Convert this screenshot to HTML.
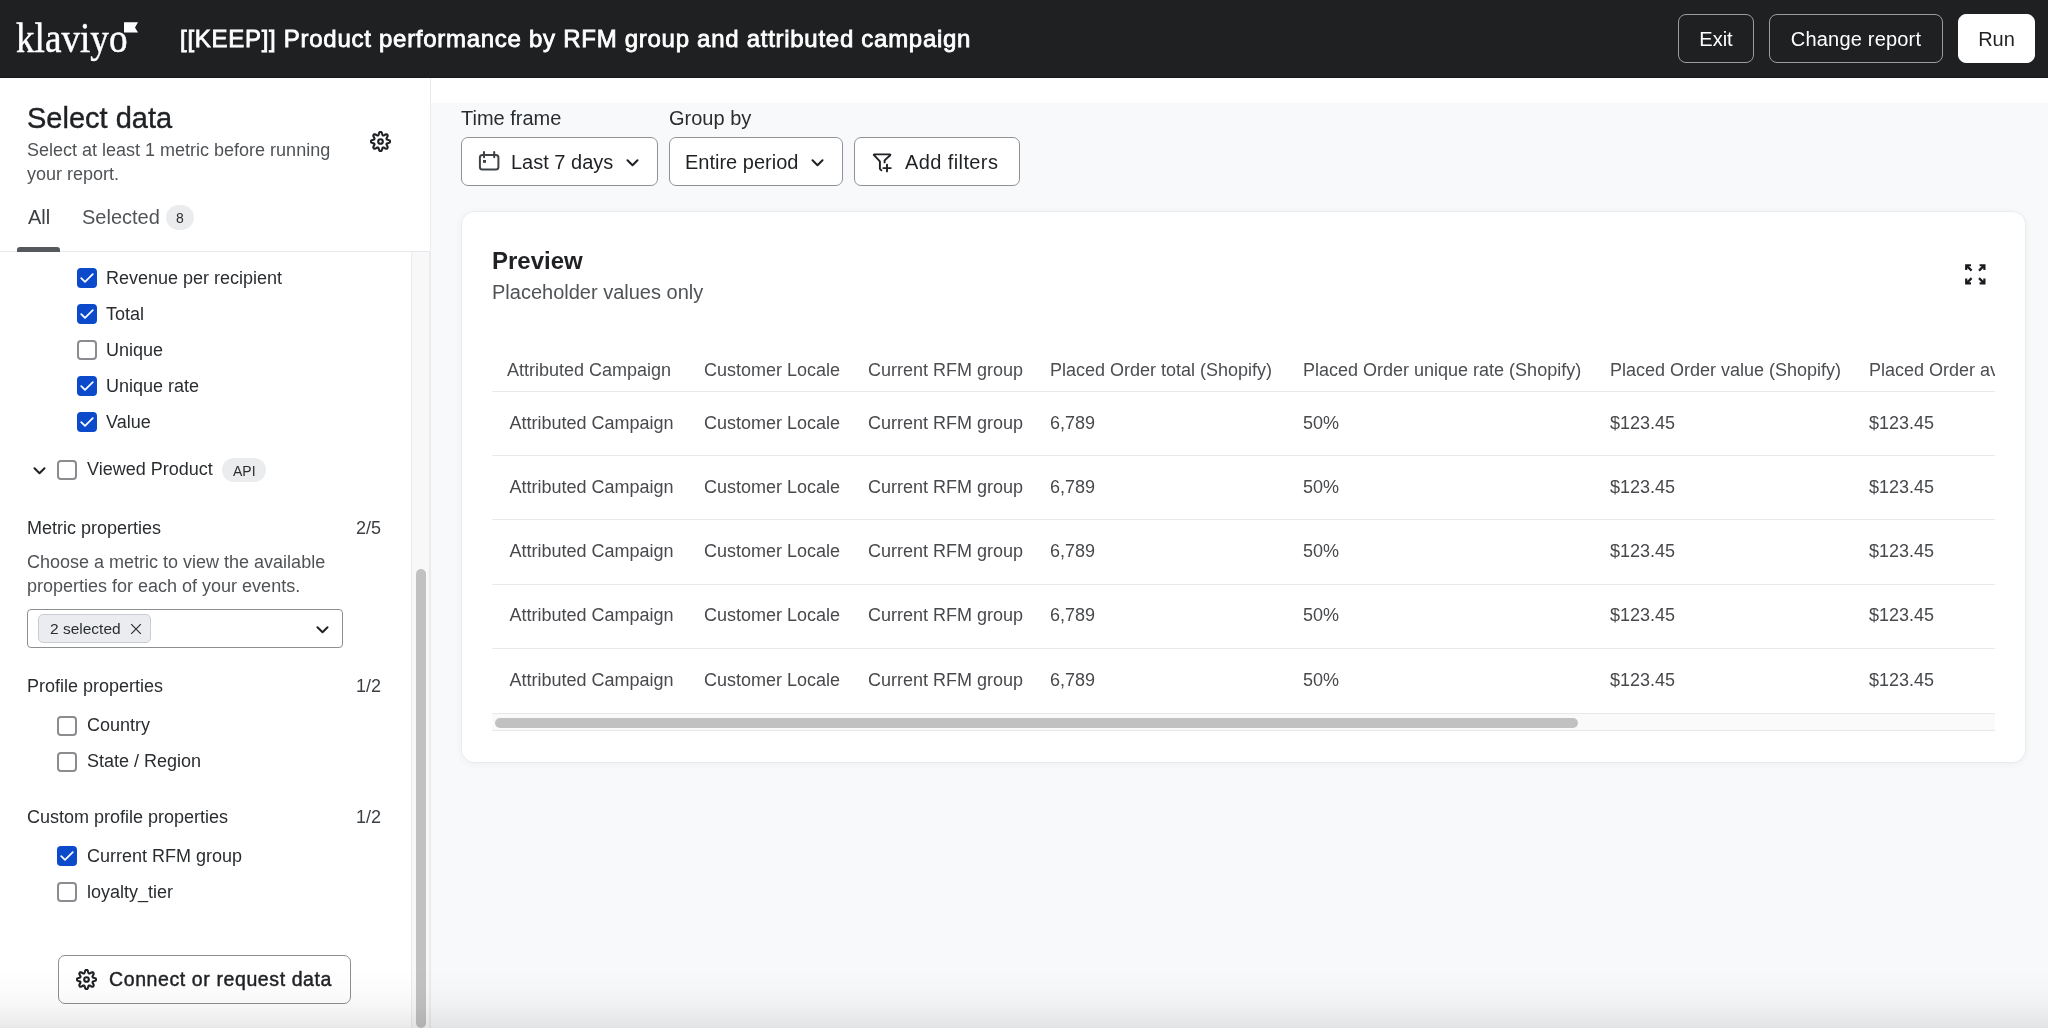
<!DOCTYPE html>
<html><head><meta charset="utf-8">
<style>
*{box-sizing:border-box;margin:0;padding:0}
html{-webkit-font-smoothing:antialiased}body{will-change:transform;width:2048px;height:1028px;overflow:hidden;background:#f8f9fa;font-family:"Liberation Sans",sans-serif;color:#1f2124}
.a{position:absolute}
.t{position:absolute;line-height:1;white-space:nowrap}
#hdr{left:0;top:0;width:2048px;height:78px;background:#1f2022;border-bottom:1px solid #16171a}
.hbtn{position:absolute;top:14px;height:49px;padding-top:2px;border:1px solid #9c9da0;border-radius:8px;color:#fff;font-size:20px;display:flex;align-items:center;justify-content:center}
#side{left:0;top:78px;width:430px;height:950px;background:#fff}
#sideb{left:430px;top:78px;width:1px;height:950px;background:#e9ebee}
.cb{position:absolute;width:20px;height:20px;border-radius:4px;background:#0b4acb}
.cb svg{position:absolute;left:0;top:0}
.cu{position:absolute;width:20px;height:20px;border-radius:4px;border:2px solid #8a8c8f;background:#fff}
.lbl{font-size:18px;color:#2a2d30}
.sec{font-size:18px;color:#2a2d30}
.cnt{font-size:18px;color:#3c3f43}
.gray{color:#505356}
.fbtn{position:absolute;top:137px;height:49px;border:1px solid #8f9195;border-radius:7px;background:#fff}
#card{left:462px;top:212px;width:1563px;height:550px;background:#fff;border-radius:13px;box-shadow:0 0 0 1px rgba(0,0,0,.035),0 1px 8px rgba(0,0,0,.06)}
.th{font-size:18px;color:#4b4d50}
.td{font-size:18px;color:#47494c}
.rb{position:absolute;left:492px;width:1503px;height:1px;background:#e8ebee}
</style></head>
<body>
<!-- HEADER -->
<div id="hdr" class="a">
  <div class="t" style="left:16px;top:15.7px;font-family:'Liberation Serif',serif;font-size:43px;color:#fff;-webkit-text-stroke:0.5px #fff;transform:scaleX(0.865);transform-origin:0 0">klaviyo</div>
  <svg class="a" style="left:124px;top:22px" width="15" height="12" viewBox="0 0 15 12"><path d="M0 0.3H14L11 5.5L14 10.6H0Z" fill="#fff"/></svg>
  <div class="t" style="left:180px;top:26.8px;font-size:24px;color:#fff;-webkit-text-stroke:0.8px #fff;letter-spacing:0.72px">[[KEEP]] Product performance by RFM group and attributed campaign</div>
  <div class="hbtn" style="left:1678px;width:76px">Exit</div>
  <div class="hbtn" style="left:1769px;width:174px;letter-spacing:0.2px">Change report</div>
  <div class="hbtn" style="left:1958px;width:77px;background:#fff;border-color:#fff;color:#1f2124">Run</div>
</div>

<!-- SIDEBAR -->
<div id="side" class="a"></div>
<div id="sideb" class="a"></div>
<div class="t" style="left:27px;top:103.9px;font-size:29px;color:#1f2124;-webkit-text-stroke:0.4px #1f2124">Select data</div>
<div class="a gray" style="left:27px;top:137.7px;font-size:18px;line-height:24.6px;white-space:nowrap">Select at least 1 metric before running<br>your report.</div>

<!-- gear defs -->
<svg width="0" height="0" style="position:absolute"><defs>
<path id="gearp" d="M10.00 0.85 L10.30 0.88 L10.59 0.99 L10.87 1.18 L11.12 1.49 L11.33 1.93 L11.50 2.45 L11.64 2.97 L11.77 3.41 L11.90 3.74 L12.05 3.97 L12.21 4.12 L12.39 4.23 L12.59 4.28 L12.82 4.29 L13.08 4.23 L13.41 4.09 L13.81 3.87 L14.28 3.60 L14.77 3.35 L15.22 3.19 L15.62 3.15 L15.95 3.21 L16.24 3.34 L16.47 3.53 L16.66 3.76 L16.79 4.05 L16.85 4.38 L16.81 4.78 L16.65 5.23 L16.40 5.72 L16.13 6.19 L15.91 6.59 L15.77 6.92 L15.71 7.18 L15.72 7.41 L15.77 7.61 L15.88 7.79 L16.03 7.95 L16.26 8.10 L16.59 8.23 L17.03 8.36 L17.55 8.50 L18.07 8.67 L18.51 8.88 L18.82 9.13 L19.01 9.41 L19.12 9.70 L19.15 10.00 L19.12 10.30 L19.01 10.59 L18.82 10.87 L18.51 11.12 L18.07 11.33 L17.55 11.50 L17.03 11.64 L16.59 11.77 L16.26 11.90 L16.03 12.05 L15.88 12.21 L15.77 12.39 L15.72 12.59 L15.71 12.82 L15.77 13.08 L15.91 13.41 L16.13 13.81 L16.40 14.28 L16.65 14.77 L16.81 15.22 L16.85 15.62 L16.79 15.95 L16.66 16.24 L16.47 16.47 L16.24 16.66 L15.95 16.79 L15.62 16.85 L15.22 16.81 L14.77 16.65 L14.28 16.40 L13.81 16.13 L13.41 15.91 L13.08 15.77 L12.82 15.71 L12.59 15.72 L12.39 15.77 L12.21 15.88 L12.05 16.03 L11.90 16.26 L11.77 16.59 L11.64 17.03 L11.50 17.55 L11.33 18.07 L11.12 18.51 L10.87 18.82 L10.59 19.01 L10.30 19.12 L10.00 19.15 L9.70 19.12 L9.41 19.01 L9.13 18.82 L8.88 18.51 L8.67 18.07 L8.50 17.55 L8.36 17.03 L8.23 16.59 L8.10 16.26 L7.95 16.03 L7.79 15.88 L7.61 15.77 L7.41 15.72 L7.18 15.71 L6.92 15.77 L6.59 15.91 L6.19 16.13 L5.72 16.40 L5.23 16.65 L4.78 16.81 L4.38 16.85 L4.05 16.79 L3.76 16.66 L3.53 16.47 L3.34 16.24 L3.21 15.95 L3.15 15.62 L3.19 15.22 L3.35 14.77 L3.60 14.28 L3.87 13.81 L4.09 13.41 L4.23 13.08 L4.29 12.82 L4.28 12.59 L4.23 12.39 L4.12 12.21 L3.97 12.05 L3.74 11.90 L3.41 11.77 L2.97 11.64 L2.45 11.50 L1.93 11.33 L1.49 11.12 L1.18 10.87 L0.99 10.59 L0.88 10.30 L0.85 10.00 L0.88 9.70 L0.99 9.41 L1.18 9.13 L1.49 8.88 L1.93 8.67 L2.45 8.50 L2.97 8.36 L3.41 8.23 L3.74 8.10 L3.97 7.95 L4.12 7.79 L4.23 7.61 L4.28 7.41 L4.29 7.18 L4.23 6.92 L4.09 6.59 L3.87 6.19 L3.60 5.72 L3.35 5.23 L3.19 4.78 L3.15 4.38 L3.21 4.05 L3.34 3.76 L3.53 3.53 L3.76 3.34 L4.05 3.21 L4.38 3.15 L4.78 3.19 L5.23 3.35 L5.72 3.60 L6.19 3.87 L6.59 4.09 L6.92 4.23 L7.18 4.29 L7.41 4.28 L7.61 4.23 L7.79 4.12 L7.95 3.97 L8.10 3.74 L8.23 3.41 L8.36 2.97 L8.50 2.45 L8.67 1.93 L8.88 1.49 L9.13 1.18 L9.41 0.99 L9.70 0.88Z"/>
<symbol id="chk" viewBox="0 0 20 20"><path d="M4.2 10.2L8 13.8L15.8 6.2" fill="none" stroke="#fff" stroke-width="1.75" stroke-linecap="round" stroke-linejoin="round"/></symbol>
<symbol id="chev" viewBox="0 0 12 8"><path d="M1 1.2L6 6.2L11 1.2" fill="none" stroke="currentColor" stroke-width="2" stroke-linecap="round" stroke-linejoin="round"/></symbol>
</defs></svg>
<svg class="a" style="left:370px;top:131px" width="21" height="21" viewBox="0 0 20 20"><use href="#gearp" fill="none" stroke="#1f2124" stroke-width="2"/><circle cx="10" cy="10" r="2.2" fill="none" stroke="#1f2124" stroke-width="2"/></svg>

<!-- tabs -->
<div class="t" style="left:28px;top:206.9px;font-size:20px;color:#3b3e42">All</div>
<div class="t" style="left:82px;top:206.9px;font-size:20px;color:#505357">Selected</div>
<div class="a" style="left:166px;top:205px;width:28px;height:25px;border-radius:13px;background:#ebecee"></div>
<div class="t" style="left:176px;top:210.9px;font-size:14px;color:#2a2d30">8</div>
<div class="a" style="left:0;top:251px;width:430px;height:1px;background:#e6e8eb"></div>
<div class="a" style="left:17px;top:247px;width:43px;height:5px;border-radius:3px 3px 0 0;background:#55585c"></div>

<!-- metric rows -->
<div class="cb" style="left:77px;top:268px"><svg width="20" height="20"><use href="#chk"/></svg></div>
<div class="t lbl" style="left:106px;top:268.6px">Revenue per recipient</div>
<div class="cb" style="left:77px;top:304px"><svg width="20" height="20"><use href="#chk"/></svg></div>
<div class="t lbl" style="left:106px;top:304.6px">Total</div>
<div class="cu" style="left:77px;top:340px"></div>
<div class="t lbl" style="left:106px;top:340.6px">Unique</div>
<div class="cb" style="left:77px;top:376px"><svg width="20" height="20"><use href="#chk"/></svg></div>
<div class="t lbl" style="left:106px;top:376.6px">Unique rate</div>
<div class="cb" style="left:77px;top:412px"><svg width="20" height="20"><use href="#chk"/></svg></div>
<div class="t lbl" style="left:106px;top:412.6px">Value</div>

<svg class="a" style="left:33px;top:467px;color:#1f2124" width="13" height="8"><use href="#chev"/></svg>
<div class="cu" style="left:57px;top:460px"></div>
<div class="t lbl" style="left:87px;top:460.3px">Viewed Product</div>
<div class="a" style="left:222px;top:458px;width:44px;height:24px;border-radius:12px;background:#ebecee"></div>
<div class="t" style="left:233px;top:463.6px;font-size:14px;color:#2a2d30">API</div>

<div class="t sec" style="left:27px;top:518.8px">Metric properties</div>
<div class="t cnt" style="left:356px;top:518.8px">2/5</div>
<div class="a gray" style="left:27px;top:549.5px;font-size:18px;line-height:24.6px;white-space:nowrap">Choose a metric to view the available<br>properties for each of your events.</div>
<div class="a" style="left:27px;top:609px;width:316px;height:39px;border:1px solid #8c8e91;border-radius:4px;background:#fff"></div>
<div class="a" style="left:38px;top:614px;width:113px;height:29px;border:1px solid #c9cdd3;border-radius:5px;background:#ebecef"></div>
<div class="t" style="left:50px;top:620.9px;font-size:15.5px;color:#2a2d30">2 selected</div>
<svg class="a" style="left:130px;top:623px" width="12" height="12"><path d="M1.2 1.2L10.8 10.8M10.8 1.2L1.2 10.8" stroke="#2a2d30" stroke-width="1.2"/></svg>
<svg class="a" style="left:316px;top:626px;color:#1f2124" width="13" height="8"><use href="#chev"/></svg>

<div class="t sec" style="left:27px;top:676.8px">Profile properties</div>
<div class="t cnt" style="left:356px;top:676.8px">1/2</div>
<div class="cu" style="left:57px;top:716px"></div>
<div class="t lbl" style="left:87px;top:716.3px">Country</div>
<div class="cu" style="left:57px;top:752px"></div>
<div class="t lbl" style="left:87px;top:752.3px">State / Region</div>

<div class="t sec" style="left:27px;top:808.2px">Custom profile properties</div>
<div class="t cnt" style="left:356px;top:808.2px">1/2</div>
<div class="cb" style="left:57px;top:846px"><svg width="20" height="20"><use href="#chk"/></svg></div>
<div class="t lbl" style="left:87px;top:846.8px">Current RFM group</div>
<div class="cu" style="left:57px;top:882px"></div>
<div class="t lbl" style="left:87px;top:882.8px">loyalty_tier</div>

<div class="a" style="left:58px;top:955px;width:293px;height:49px;border:1px solid #8c8e91;border-radius:7px;background:#fff"></div>
<svg class="a" style="left:75.5px;top:969px" width="21" height="21" viewBox="0 0 20 20"><use href="#gearp" fill="none" stroke="#1f2124" stroke-width="2"/><circle cx="10" cy="10" r="2.2" fill="none" stroke="#1f2124" stroke-width="2"/></svg>
<div class="t" style="left:109px;top:970.2px;font-size:19.5px;color:#1f2124;-webkit-text-stroke:0.45px #1f2124;letter-spacing:0.6px">Connect or request data</div>

<!-- sidebar scrollbar -->
<div class="a" style="left:411px;top:252px;width:19px;height:776px;background:#f8f8f8;border-left:1px solid #ebebeb;border-right:1px solid #ebebeb"></div>
<div class="a" style="left:416px;top:569px;width:10px;height:459px;border-radius:5px;background:#c1c1c1"></div>

<!-- MAIN -->
<div class="a" style="left:431px;top:78px;width:1617px;height:25px;background:#fff"></div>
<div class="t" style="left:461px;top:108px;font-size:20px;color:#2a2d30">Time frame</div>
<div class="t" style="left:669px;top:108px;font-size:20px;color:#2a2d30">Group by</div>
<div class="fbtn" style="left:461px;width:197px"></div>
<div class="fbtn" style="left:669px;width:174px"></div>
<div class="fbtn" style="left:854px;width:166px"></div>
<div class="t" style="left:511px;top:152.4px;font-size:20px;color:#1f2124">Last 7 days</div>
<div class="t" style="left:685px;top:152.4px;font-size:20px;color:#1f2124">Entire period</div>
<div class="t" style="left:905px;top:152.4px;font-size:20px;color:#1f2124;letter-spacing:0.4px">Add filters</div>

<div id="card" class="a"></div>
<div class="t" style="left:492px;top:249px;font-size:24px;font-weight:700;color:#1f2124">Preview</div>
<div class="t gray" style="left:492px;top:281.7px;font-size:20px">Placeholder values only</div>

<!-- filter bar icons -->
<svg class="a" style="left:477px;top:150px" width="24" height="22" viewBox="0 0 24 22"><rect x="2.9" y="4.9" width="18.5" height="14.7" rx="2.5" fill="none" stroke="#3f4246" stroke-width="2"/><path d="M7 2V7.3M17.2 2V7.3" stroke="#3f4246" stroke-width="2" stroke-linecap="round"/><rect x="6" y="10" width="3" height="2.8" fill="#3f4246"/></svg>
<svg class="a" style="left:626px;top:159px;color:#1f2124" width="13" height="8"><use href="#chev"/></svg>
<svg class="a" style="left:811px;top:159px;color:#1f2124" width="13" height="8"><use href="#chev"/></svg>
<svg class="a" style="left:870px;top:150px" width="24" height="24" viewBox="0 0 24 24"><path d="M11.4 20.3L9.9 18.8V11.4L4 5.2Q3.4 4.4 4.4 4.4H19.8Q20.8 4.4 20.2 5.2L14.6 10.4V12.4" fill="none" stroke="#1f2124" stroke-width="1.9" stroke-linecap="round" stroke-linejoin="round"/><path d="M17 14.6V21.4M13.3 18.1H20.8" stroke="#1f2124" stroke-width="1.9" stroke-linecap="round"/></svg>

<!-- expand icon -->
<svg class="a" style="left:1960px;top:258px" width="32" height="32" viewBox="0 0 32 32"><g fill="none" stroke="#1a1b1e" stroke-width="2.2" stroke-linecap="butt" stroke-linejoin="miter"><path d="M11 7.25H6.2V12.1M6.8 7.85L11.6 12.6"/><g transform="translate(30.6 0) scale(-1 1)"><path d="M11 7.25H6.2V12.1M6.8 7.85L11.6 12.6"/></g><g transform="translate(0 32.7) scale(1 -1)"><path d="M11 7.25H6.2V12.1M6.8 7.85L11.6 12.6"/></g><g transform="translate(30.6 32.7) scale(-1 -1)"><path d="M11 7.25H6.2V12.1M6.8 7.85L11.6 12.6"/></g></g></svg>

<!-- table -->
<div class="a" style="left:492px;top:330px;width:1503px;height:420px;overflow:hidden">
<div class="t th" style="left:15px;top:30.8px">Attributed Campaign</div>
<div class="t th" style="left:212px;top:30.8px">Customer Locale</div>
<div class="t th" style="left:376px;top:30.8px">Current RFM group</div>
<div class="t th" style="left:558px;top:30.8px">Placed Order total (Shopify)</div>
<div class="t th" style="left:811px;top:30.8px">Placed Order unique rate (Shopify)</div>
<div class="t th" style="left:1118px;top:30.8px">Placed Order value (Shopify)</div>
<div class="t th" style="left:1377px;top:30.8px">Placed Order average value (Shopify)</div>
<div class="rb" style="left:0;top:61px"></div>
<div class="t td" style="left:17.5px;top:83.8px">Attributed Campaign</div>
<div class="t td" style="left:212.0px;top:83.8px">Customer Locale</div>
<div class="t td" style="left:376.0px;top:83.8px">Current RFM group</div>
<div class="t td" style="left:558.0px;top:83.8px">6,789</div>
<div class="t td" style="left:811.0px;top:83.8px">50%</div>
<div class="t td" style="left:1118.0px;top:83.8px">$123.45</div>
<div class="t td" style="left:1377.0px;top:83.8px">$123.45</div>
<div class="rb" style="left:0;top:125.2px"></div>
<div class="t td" style="left:17.5px;top:148.0px">Attributed Campaign</div>
<div class="t td" style="left:212.0px;top:148.0px">Customer Locale</div>
<div class="t td" style="left:376.0px;top:148.0px">Current RFM group</div>
<div class="t td" style="left:558.0px;top:148.0px">6,789</div>
<div class="t td" style="left:811.0px;top:148.0px">50%</div>
<div class="t td" style="left:1118.0px;top:148.0px">$123.45</div>
<div class="t td" style="left:1377.0px;top:148.0px">$123.45</div>
<div class="rb" style="left:0;top:189.4px"></div>
<div class="t td" style="left:17.5px;top:212.2px">Attributed Campaign</div>
<div class="t td" style="left:212.0px;top:212.2px">Customer Locale</div>
<div class="t td" style="left:376.0px;top:212.2px">Current RFM group</div>
<div class="t td" style="left:558.0px;top:212.2px">6,789</div>
<div class="t td" style="left:811.0px;top:212.2px">50%</div>
<div class="t td" style="left:1118.0px;top:212.2px">$123.45</div>
<div class="t td" style="left:1377.0px;top:212.2px">$123.45</div>
<div class="rb" style="left:0;top:253.6px"></div>
<div class="t td" style="left:17.5px;top:276.4px">Attributed Campaign</div>
<div class="t td" style="left:212.0px;top:276.4px">Customer Locale</div>
<div class="t td" style="left:376.0px;top:276.4px">Current RFM group</div>
<div class="t td" style="left:558.0px;top:276.4px">6,789</div>
<div class="t td" style="left:811.0px;top:276.4px">50%</div>
<div class="t td" style="left:1118.0px;top:276.4px">$123.45</div>
<div class="t td" style="left:1377.0px;top:276.4px">$123.45</div>
<div class="rb" style="left:0;top:317.8px"></div>
<div class="t td" style="left:17.5px;top:340.6px">Attributed Campaign</div>
<div class="t td" style="left:212.0px;top:340.6px">Customer Locale</div>
<div class="t td" style="left:376.0px;top:340.6px">Current RFM group</div>
<div class="t td" style="left:558.0px;top:340.6px">6,789</div>
<div class="t td" style="left:811.0px;top:340.6px">50%</div>
<div class="t td" style="left:1118.0px;top:340.6px">$123.45</div>
<div class="t td" style="left:1377.0px;top:340.6px">$123.45</div>
<div class="a" style="left:0;top:383px;width:1503px;height:18px;background:#fafafa;border-top:1px solid #e8e8e8;border-bottom:1px solid #e8e8e8"></div>
<div class="a" style="left:3px;top:388px;width:1083px;height:10px;border-radius:5px;background:#c1c1c1"></div>
</div>

<div class="a" style="left:0;top:968px;width:2048px;height:60px;background:linear-gradient(to bottom,rgba(0,0,0,0) 0%,rgba(0,0,0,0.012) 35%,rgba(0,0,0,0.035) 65%,rgba(0,0,0,0.085) 100%);pointer-events:none"></div>
</body></html>
